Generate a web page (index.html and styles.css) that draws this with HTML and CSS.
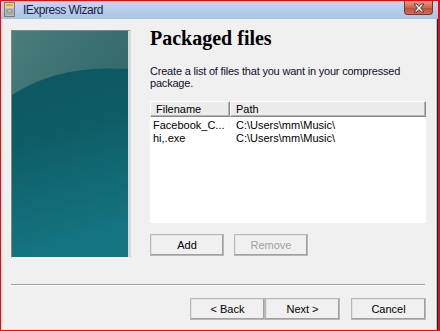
FILE: index.html
```html
<!DOCTYPE html>
<html>
<head>
    <title>IExpress Wizard</title>
    <link rel="stylesheet" href="styles.css">
</head>
<body>
    <div class="window">
        <!-- Title bar -->
        <div class="titlebar">
            <svg class="app-icon" width="11" height="15" viewBox="0 0 11 15">
                <rect x="0.5" y="0.5" width="10" height="14" fill="#c4c4c4" stroke="#7a7a7a"/>
                <rect x="1" y="1" width="9" height="5" fill="#f2d27a"/>
                <line x1="2" y1="3" x2="9" y2="3" stroke="#b08a30"/>
                <rect x="1" y="6" width="9" height="8" fill="#bcbcbc"/>
                <rect x="3" y="8" width="5" height="2" fill="#f4f4f4" stroke="#6a6a6a" stroke-width="0.8"/>
                <line x1="1" y1="12" x2="10" y2="12" stroke="#9a9a9a"/>
            </svg>
            <span class="title">IExpress Wizard</span>
            <div class="close-btn">
                <svg width="14" height="10" viewBox="0 0 14 10">
                    <path d="M2 1 L5 1 L7 3.5 L9 1 L12 1 L8.6 5 L12 9 L9 9 L7 6.5 L5 9 L2 9 L5.4 5 Z" fill="#fff" stroke="#4a2a2a" stroke-width="0.9" stroke-linejoin="round"/>
                </svg>
            </div>
        </div>

        <div class="frame">
            <div class="client">
                <div class="main">
                    <!-- Wizard side picture -->
                    <div class="side-image">
                        <svg width="116" height="226" viewBox="0 0 116 226">
                            <defs>
                                <linearGradient id="teal" x1="0" y1="0" x2="0.15" y2="1">
                                    <stop offset="0" stop-color="#0c535b"/>
                                    <stop offset="0.5" stop-color="#0e5d66"/>
                                    <stop offset="1" stop-color="#147581"/>
                                </linearGradient>
                                <linearGradient id="gloss" x1="0" y1="0" x2="1" y2="0.4">
                                    <stop offset="0" stop-color="#4a7d7b"/>
                                    <stop offset="1" stop-color="#356b6d"/>
                                </linearGradient>
                            </defs>
                            <rect width="116" height="226" fill="url(#teal)"/>
                            <path d="M0 0 H116 V38 C82 36 40 38 0 64 Z" fill="url(#gloss)"/>
                        </svg>
                    </div>

                    <div class="page">
                        <h1>Packaged files</h1>
                        <p class="desc">Create a list of files that you want in your compressed package.</p>

                        <div class="listview">
                            <div class="lv-header">
                                <div class="lv-col name">Filename</div>
                                <div class="lv-col path">Path</div>
                            </div>
                            <div class="lv-rows">
                                <div class="lv-row">
                                    <span class="name">Facebook_C...</span>
                                    <span class="path">C:\Users\mm\Music\</span>
                                </div>
                                <div class="lv-row">
                                    <span class="name">hi,.exe</span>
                                    <span class="path">C:\Users\mm\Music\</span>
                                </div>
                            </div>
                        </div>

                        <div class="list-buttons">
                            <button class="btn">Add</button>
                            <button class="btn" disabled>Remove</button>
                        </div>
                    </div>
                </div>

                <div class="separator"></div>

                <div class="footer">
                    <button class="btn">&lt; Back</button>
                    <button class="btn">Next &gt;</button>
                    <button class="btn cancel">Cancel</button>
                </div>
            </div>
            <div class="frame-edge"></div>
        </div>
    </div>
</body>
</html>
```

FILE: styles.css
```css
body {
    margin: 0;
    font-family: "Liberation Sans", Arial, sans-serif;
    font-size: 11px;
    color: #000;
}

.window {
    width: 440px;
    height: 331px;
    box-sizing: border-box;
    border: 1px solid #ff0000;
    border-right-width: 2px;
    display: flex;
    flex-direction: column;
    background: #f0f0f0;
}

/* Title bar */
.titlebar {
    height: 18px;
    display: flex;
    align-items: flex-start;
    background: linear-gradient(to bottom, #c4d8ee, #a9c4e2);
}

.app-icon {
    margin: 1px 0 0 3px;
}

.title {
    margin: 2px 0 0 8px;
    font-size: 12px;
    line-height: 14px;
    letter-spacing: -0.5px;
    color: #1c1c44;
}

.close-btn {
    margin-left: auto;
    margin-right: 5px;
    width: 29px;
    height: 14px;
    box-sizing: border-box;
    border: 1px solid #7a3326;
    border-top: none;
    border-radius: 0 0 4px 4px;
    background: linear-gradient(to bottom, #e8a08e, #d2624a 50%, #c24a32 51%, #d2705a);
    display: flex;
    align-items: center;
    justify-content: center;
}

.frame {
    flex: 1;
    display: flex;
}

.frame-edge {
    width: 1px;
    border-left: 1px solid #8fd0ee;
    background: #1a2a3a;
}

.client {
    flex: 1;
    display: flex;
    flex-direction: column;
    padding: 0 10px;
}

.main {
    display: flex;
    align-items: flex-start;
    gap: 19px;
}

/* Left picture */
.side-image {
    margin-top: 11px;
    width: 116px;
    height: 226px;
    border-top: 1px solid #858585;
    border-left: 1px solid #858585;
    border-right: 3px solid #dadada;
    border-bottom: 1px solid #fafafa;
}

.side-image svg {
    display: block;
}

/* Right page */
.page {
    flex: 1;
    margin-top: 7px;
}

h1 {
    margin: 0;
    font-family: "Liberation Serif", "Times New Roman", serif;
    font-size: 20px;
    line-height: 24px;
    font-weight: bold;
}

.desc {
    margin: 15px 0 0 0;
    line-height: 12px;
    letter-spacing: -0.2px;
    color: #10102a;
}

.listview {
    margin-top: 12px;
    height: 122px;
    background: #fff;
}

.lv-header {
    display: flex;
    height: 16px;
}

.lv-col {
    box-sizing: border-box;
    height: 16px;
    line-height: 14px;
    padding-left: 5px;
    background: #ececec;
    border-top: 1px solid #fff;
    border-left: 1px solid #fff;
    border-bottom: 1px solid #8a8a8a;
    border-right: 1px solid #8a8a8a;
    box-shadow: inset 0 -1px #b4b4b4, inset -1px 0 #b4b4b4;
}

.lv-col.name {
    width: 80px;
}

.lv-col.path {
    flex: 1;
}

.lv-rows {
    padding-top: 2px;
}

.lv-row {
    display: flex;
    height: 13px;
    line-height: 13px;
}

.lv-row .name {
    width: 80px;
    padding-left: 3px;
}

.lv-row .path {
    padding-left: 3px;
}

.list-buttons {
    display: flex;
    gap: 10px;
    margin-top: 11px;
}

/* Classic push buttons */
.btn {
    width: 75px;
    height: 22px;
    padding: 0;
    font-family: "Liberation Sans", Arial, sans-serif;
    font-size: 11px;
    color: #000;
    background: #f0f0f0;
    border: 1px solid;
    border-color: #fff #696969 #696969 #fff;
    box-shadow: inset -1px -1px #a0a0a0, inset 1px 1px #e3e3e3;
    outline: 1px solid #b8b8b8;
    outline-offset: -1px;
    border-radius: 0;
}

.list-buttons .btn {
    width: 74px;
}

.btn:disabled {
    color: #a0a0a0;
}

.separator {
    margin-top: 26px;
    width: 414px;
    border-top: 1px solid #a0a0a0;
    border-bottom: 1px solid #fff;
}

.footer {
    display: flex;
    justify-content: flex-end;
    margin-top: 12px;
}

.footer .cancel {
    margin-left: 11px;
}
```
